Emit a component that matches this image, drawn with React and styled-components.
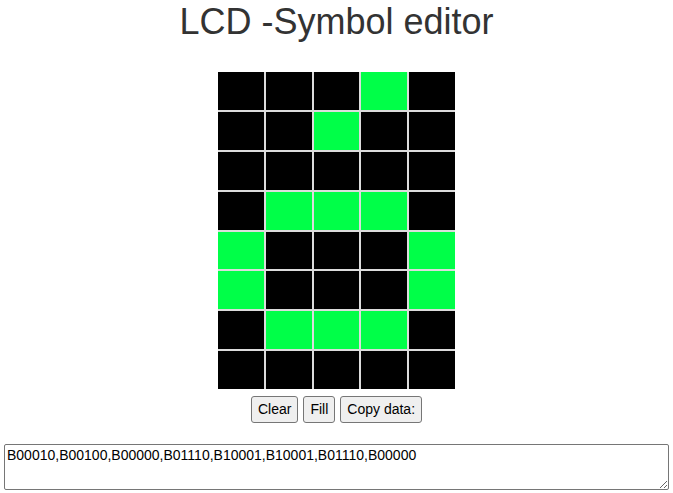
import React, { useState } from 'react'
import styled, { createGlobalStyle } from 'styled-components'

const initial = [
  '00010',
  '00100',
  '00000',
  '01110',
  '10001',
  '10001',
  '01110',
  '00000'
].map(row => row.split('').map(c => c === '1'))

const App = () => {
  const [pixels, setPixels] = useState(initial)

  const toggle = (r, c) => {
    setPixels(prev =>
      prev.map((row, ri) => row.map((on, ci) => (ri === r && ci === c ? !on : on)))
    )
  }

  const setAll = value => {
    setPixels(prev => prev.map(row => row.map(() => value)))
  }

  const data = pixels
    .map(row => 'B' + row.map(on => (on ? '1' : '0')).join(''))
    .join(',')

  const copyData = () => {
    if (navigator.clipboard) navigator.clipboard.writeText(data).catch(() => {})
  }

  return (
    <Page>
      <GlobalStyle />
      <Title>LCD -Symbol editor</Title>
      <Matrix>
        {pixels.map((row, r) =>
          row.map((on, c) => (
            <Pixel key={r + '-' + c} on={on ? 1 : 0} onClick={() => toggle(r, c)} />
          ))
        )}
      </Matrix>
      <Toolbar>
        <Button onClick={() => setAll(false)}>Clear</Button>
        <Button onClick={() => setAll(true)}>Fill</Button>
        <Button onClick={copyData}>Copy data:</Button>
      </Toolbar>
      <Output value={data} readOnly />
    </Page>
  )
}

/* Styling */

const GlobalStyle = createGlobalStyle`
  body {
    margin: 0;
    background: #fff;
    font-family: "Liberation Sans", Arial, sans-serif;
  }
`

const Page = styled.div`
  display: flex;
  flex-direction: column;
  align-items: center;
  padding: 0 4px;
`

const Title = styled.h1`
  margin: 2px 0 30px;
  font-size: 36px;
  font-weight: normal;
  color: #333;
  line-height: 40px;
`

const Matrix = styled.div`
  display: grid;
  grid-template-columns: repeat(5, 45.8px);
  grid-auto-rows: 37.9px;
  gap: 2px;
  background: #dcdcdc;
`

const Pixel = styled.div`
  background: ${p => (p.on ? '#00ff48' : '#000')};
  cursor: pointer;
`

const Toolbar = styled.div`
  display: flex;
  gap: 5px;
  margin-top: 7px;
`

const Button = styled.button`
  font-family: "Liberation Sans", Arial, sans-serif;
  font-size: 14px;
  line-height: 17px;
  padding: 4px 6px;
  color: #000;
  background: #efefef;
  border: 1px solid #767676;
  border-radius: 3px;
  cursor: pointer;

  &:hover {
    background: #e5e5e5;
  }
`

const Output = styled.textarea`
  box-sizing: border-box;
  width: 100%;
  height: 46px;
  margin-top: 21px;
  padding: 2px;
  font-family: "Liberation Sans", Arial, sans-serif;
  font-size: 14px;
  color: #000;
  border: 1px solid #767676;
  border-radius: 2px;
`

/* End of Styling */
export default App
